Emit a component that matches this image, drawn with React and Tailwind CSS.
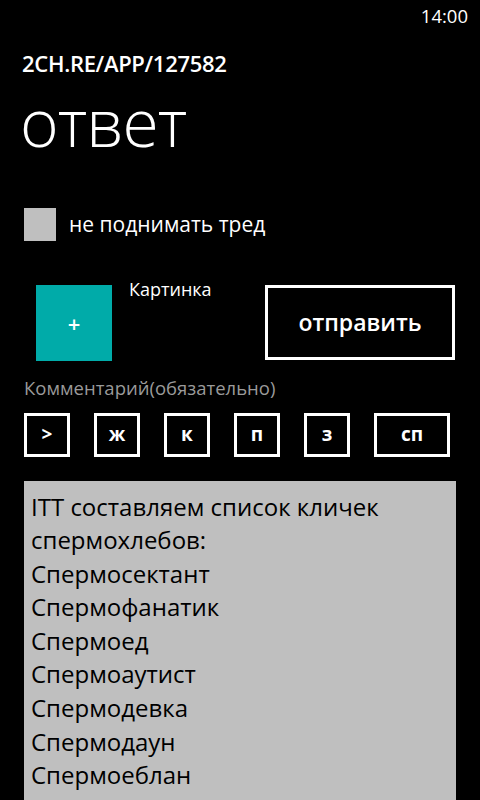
import React, { useState } from "react";

const formatKeys = [
  { label: ">", w: "w-[46px]" },
  { label: "ж", w: "w-[46px]" },
  { label: "к", w: "w-[46px]" },
  { label: "п", w: "w-[46px]" },
  { label: "з", w: "w-[46px]" },
  { label: "сп", w: "w-[76px]" },
];

const comment = `ITT составляем список кличек спермохлебов:
Спермосектант
Спермофанатик
Спермоед
Спермоаутист
Спермодевка
Спермодаун
Спермоеблан`;

const App = () => {
  const [keepThread, setKeepThread] = useState(false);
  const [text, setText] = useState(comment);

  return (
    <main className="w-[480px] h-[800px] bg-black text-white overflow-hidden font-['Open_Sans',sans-serif]">
      {/* status bar */}
      <div className="h-[32px] flex justify-end items-center pr-[12px] text-[18.5px] leading-none">14:00</div>

      <div className="pl-[22px] mt-[20px] text-[22px] font-semibold leading-none tracking-[-0.3px]">2CH.RE/APP/127582</div>
      <h1 className="pl-[20px] mt-[14px] text-[66px] font-light leading-none tracking-[-1px]">ответ</h1>

      <label className="mt-[54px] ml-[24px] flex items-center gap-[13px] cursor-pointer" onClick={() => setKeepThread(!keepThread)}>
        <span className="w-[32px] h-[33px] bg-[#bfbfbf] flex items-center justify-center text-black text-[20px]">{keepThread ? "✓" : ""}</span>
        <span className="text-[21px] leading-none">не поднимать тред</span>
      </label>

      <div className="mt-[42px] flex">
        <div className="ml-[36px] mt-[2px] w-[76px] h-[76px] bg-[#00aba9] flex items-center justify-center text-[22px] font-semibold">+</div>
        <div className="ml-[17px] text-[18px] leading-none mt-[-3px]">Картинка</div>
        <button className="ml-auto mr-[25px] mt-[2px] w-[190px] h-[75px] border-[3px] border-white text-[23px] font-semibold">отправить</button>
      </div>

      <div className="ml-[24px] mt-[18px] text-[18.5px] text-[#9a9a9a] leading-none">Комментарий(обязательно)</div>

      <div className="ml-[24px] mt-[15px] flex gap-[24px]">
        {formatKeys.map((k) => (
          <button key={k.label} className={`${k.w} h-[44px] border-[3px] border-white text-[19px] font-bold leading-none`}>{k.label}</button>
        ))}
      </div>

      <textarea
        value={text}
        onChange={(e) => setText(e.target.value)}
        className="block mt-[24px] ml-[24px] w-[432px] h-[340px] bg-[#bfbfbf] text-black text-[24px] leading-[33.6px] px-[7px] pt-[9px] resize-none outline-none overflow-hidden font-['Open_Sans',sans-serif]"
      />
    </main>
  );
};

export default App;
